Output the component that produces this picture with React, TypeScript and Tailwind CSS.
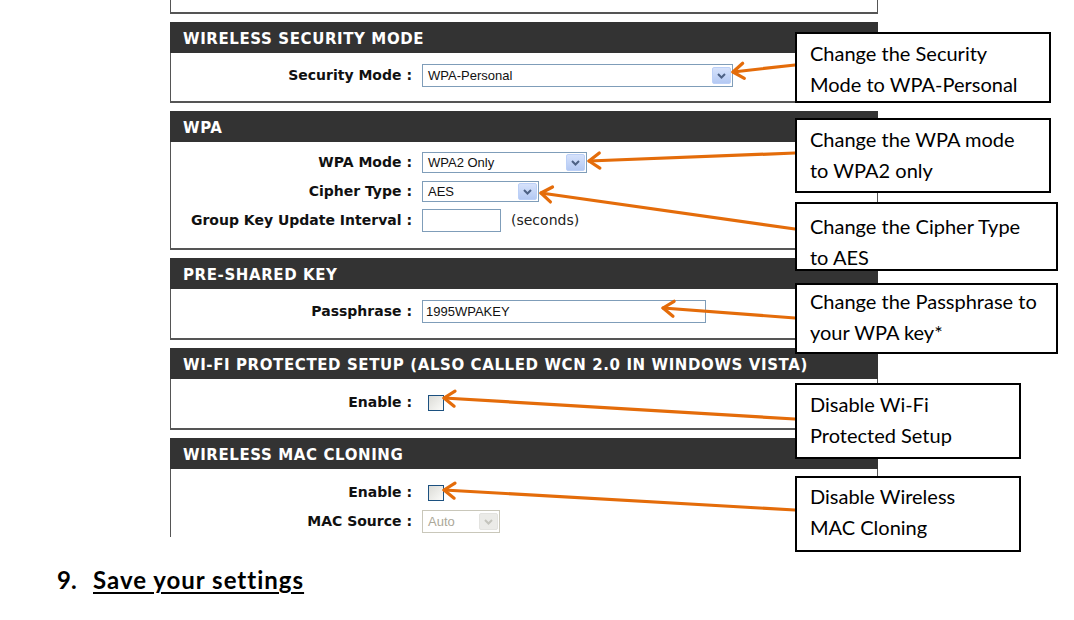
import type { ReactNode } from "react";

const ORANGE = "#e46c0a";

function Header({ children }: { children: ReactNode }) {
  return (
    <div className="flex h-[31px] items-center bg-[#333333] pl-[13px] pt-[3px] font-['DejaVu_Sans',sans-serif] text-[15px] font-bold uppercase tracking-[0.6px] text-white">
      {children}
    </div>
  );
}

function Row({ label, children }: { label: string; children: ReactNode }) {
  return (
    <div className="flex h-[29px] items-center">
      <div className="w-[241px] text-right font-['DejaVu_Sans',sans-serif] text-[14px] font-bold text-[#111]">
        {label} :
      </div>
      <div className="ml-[10px] flex items-center">{children}</div>
    </div>
  );
}

function Chevron({ color }: { color: string }) {
  return (
    <svg width="9" height="6" viewBox="0 0 9 6">
      <path d="M1 1 L4.5 4.5 L8 1" fill="none" stroke={color} strokeWidth="2" />
    </svg>
  );
}

function Select({ value, className, disabled }: { value: string; className: string; disabled?: boolean }) {
  return (
    <div
      className={
        "flex items-center justify-between border bg-white pl-[5px] pr-[1px] font-['Liberation_Sans',sans-serif] text-[13px] " +
        (disabled ? "border-[#c9c7ba] text-[#aca899] " : "border-[#7f9db9] text-[#111] ") +
        className
      }
    >
      <span>{value}</span>
      <span
        className={
          "flex h-[17px] w-[19px] items-center justify-center rounded-[2px] border " +
          (disabled ? "border-[#e3e3e0] bg-[#ebebe8]" : "border-[#bcd0f7] bg-gradient-to-b from-[#d6e2fb] to-[#b4c9f3]")
        }
      >
        <Chevron color={disabled ? "#c4c4bd" : "#4d6185"} />
      </span>
    </div>
  );
}

function TextInput({ value, className }: { value?: string; className: string }) {
  return (
    <div className={"flex items-center border border-[#7f9db9] bg-white pl-[3px] font-['Liberation_Sans',sans-serif] text-[13px] text-[#111] " + className}>
      {value}
    </div>
  );
}

function Checkbox() {
  return <div className="ml-[6px] h-[16px] w-[16px] border border-[#1c5180] bg-gradient-to-br from-[#dcdcd7] to-[#fbfbf9]" />;
}

type Arrow = [number, number, number, number];

const arrows: Arrow[] = [
  [795, 65, 733, 72],
  [795, 153, 589, 161],
  [795, 229, 541, 193],
  [795, 318, 663, 308],
  [795, 419, 444, 398],
  [795, 510, 444, 490],
];

function headPath([x1, y1, x2, y2]: Arrow) {
  const a = Math.atan2(y1 - y2, x1 - x2);
  const len = 13;
  const spread = 0.62;
  const p1 = [x2 + len * Math.cos(a + spread), y2 + len * Math.sin(a + spread)];
  const p2 = [x2 + len * Math.cos(a - spread), y2 + len * Math.sin(a - spread)];
  return `M${p1[0]} ${p1[1]} L${x2} ${y2} L${p2[0]} ${p2[1]}`;
}

const callouts = [
  { top: "top-[32px] h-[71px] w-[256px] pt-[4px]", lines: ["Change the Security", "Mode to WPA-Personal"] },
  { top: "top-[118px] h-[75px] w-[256px] pt-[4px]", lines: ["Change the WPA mode", "to WPA2 only"] },
  { top: "top-[202px] h-[69px] w-[263px] pt-[7px]", lines: ["Change the Cipher Type", "to AES"] },
  { top: "top-[283px] h-[71px] w-[263px] pt-[1px]", lines: ["Change the Passphrase to", "your WPA key*"] },
  { top: "top-[383px] h-[76px] w-[226px] pt-[4px]", lines: ["Disable Wi-Fi", "Protected Setup"] },
  { top: "top-[476px] h-[76px] w-[226px] pt-[3px]", lines: ["Disable Wireless", "MAC Cloning"] },
];

export default function App() {
  return (
    <div className="relative h-[620px] w-[1074px] overflow-hidden bg-white">
      {/* router settings panels */}
      <div className="ml-[170px] flex w-[708px] flex-col">
        <div className="h-[14px] border-x border-b-2 border-[#555]" />

        <div className="mt-[8px]">
          <Header>Wireless Security Mode</Header>
          <div className="h-[50px] border-x border-b-2 border-[#555] pt-[8px]">
            <Row label="Security Mode">
              <Select value="WPA-Personal" className="h-[23px] w-[311px]" />
            </Row>
          </div>
        </div>

        <div className="mt-[8px]">
          <Header>WPA</Header>
          <div className="h-[108px] border-x border-b-2 border-[#555] pt-[6px]">
            <Row label="WPA Mode">
              <Select value="WPA2 Only" className="h-[21px] w-[165px]" />
            </Row>
            <Row label="Cipher Type">
              <Select value="AES" className="h-[21px] w-[117px]" />
            </Row>
            <Row label="Group Key Update Interval">
              <TextInput className="h-[23px] w-[79px]" />
              <span className="ml-[10px] font-['DejaVu_Sans',sans-serif] text-[14px] text-[#222]">(seconds)</span>
            </Row>
          </div>
        </div>

        <div className="mt-[8px]">
          <Header>Pre-Shared Key</Header>
          <div className="h-[51px] border-x border-b-2 border-[#555] pt-[8px]">
            <Row label="Passphrase">
              <TextInput value="1995WPAKEY" className="h-[23px] w-[284px] text-[12px]" />
            </Row>
          </div>
        </div>

        <div className="mt-[8px]">
          <Header>Wi-Fi Protected Setup (also called WCN 2.0 in Windows Vista)</Header>
          <div className="h-[51px] border-x border-b-2 border-[#555] pt-[9px]">
            <Row label="Enable">
              <Checkbox />
            </Row>
          </div>
        </div>

        <div className="mt-[8px]">
          <Header>Wireless MAC Cloning</Header>
          <div className="h-[68px] border-x border-[#555] pt-[9px]">
            <Row label="Enable">
              <Checkbox />
            </Row>
            <Row label="MAC Source">
              <Select value="Auto" disabled className="h-[23px] w-[78px]" />
            </Row>
          </div>
        </div>
      </div>

      <div className="ml-[57px] mt-[28px] flex font-['Lato',sans-serif] text-[24px] font-bold leading-[30px] text-black">
        <span className="w-[36px]">9.</span>
        <span className="underline decoration-2 underline-offset-[3px] tracking-[1px]">Save your settings</span>
      </div>

      {/* orange arrows */}
      <svg className="pointer-events-none absolute left-0 top-0" width="1074" height="620">
        {arrows.map((a, i) => (
          <g key={i} stroke={ORANGE} strokeWidth="3.2" fill="none" strokeLinecap="round" strokeLinejoin="round">
            <line x1={a[0]} y1={a[1]} x2={a[2]} y2={a[3]} />
            <path d={headPath(a)} />
          </g>
        ))}
      </svg>

      {/* callouts */}
      {callouts.map((c, i) => (
        <div
          key={i}
          className={"absolute left-[795px] border-2 border-black bg-white pl-[13px] font-['Lato',sans-serif] text-[20px] leading-[31px] text-black " + c.top}
        >
          {c.lines.map((l) => (
            <div key={l}>{l}</div>
          ))}
        </div>
      ))}
    </div>
  );
}
